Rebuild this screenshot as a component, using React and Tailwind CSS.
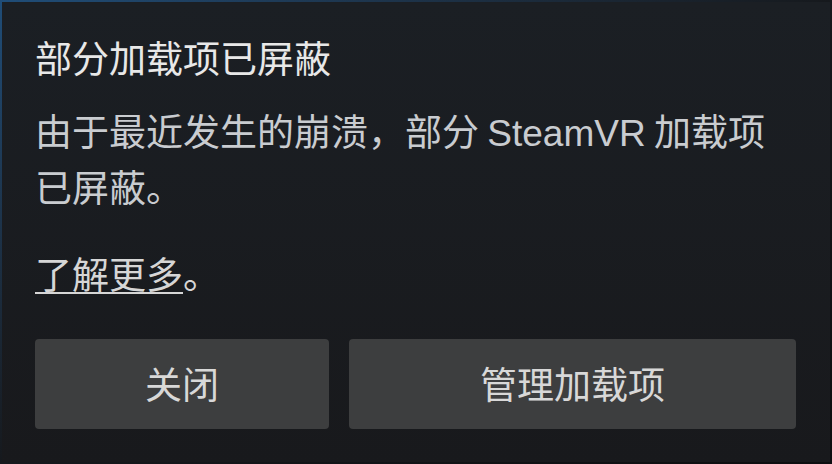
export default function App() {
  const cjk = { fontFamily: '"Noto Sans CJK SC", "Liberation Sans", sans-serif' }
  return (
    <div className="w-[832px] h-[464px] bg-gradient-to-br from-[#1f4d78] via-[#16191d] to-[#0d0e10] p-[2px]">
      <div
        className="w-full h-full bg-[#1b1e22] bg-gradient-to-b from-[#1b1f24] to-[#18191c] px-[33px] pt-[29px] flex flex-col"
        style={cjk}
      >
        <h1 className="text-[37px] leading-[53px] text-[#e8e8e8] font-normal">部分加载项已屏蔽</h1>
        <p className="mt-[20px] text-[37px] leading-[53px] text-[#c9ccd0]">
          由于最近发生的崩溃，部分 <span style={{ fontFamily: '"Liberation Sans", sans-serif' }}>SteamVR</span> 加载项已屏蔽。
        </p>
        <p className="mt-[34px] text-[37px] leading-[53px] text-[#d6d6d6]">
          <a href="#" className="underline decoration-2 underline-offset-[3px]">了解更多</a>。
        </p>
        <div className="mt-[39px] flex gap-[20px]">
          <button className="w-[294px] h-[90px] rounded-[4px] bg-[#3d3e3f] text-[37px] text-[#d8d8d8]">关闭</button>
          <button className="w-[447px] h-[90px] rounded-[4px] bg-[#3d3e3f] text-[37px] text-[#d8d8d8]">管理加载项</button>
        </div>
      </div>
    </div>
  )
}
